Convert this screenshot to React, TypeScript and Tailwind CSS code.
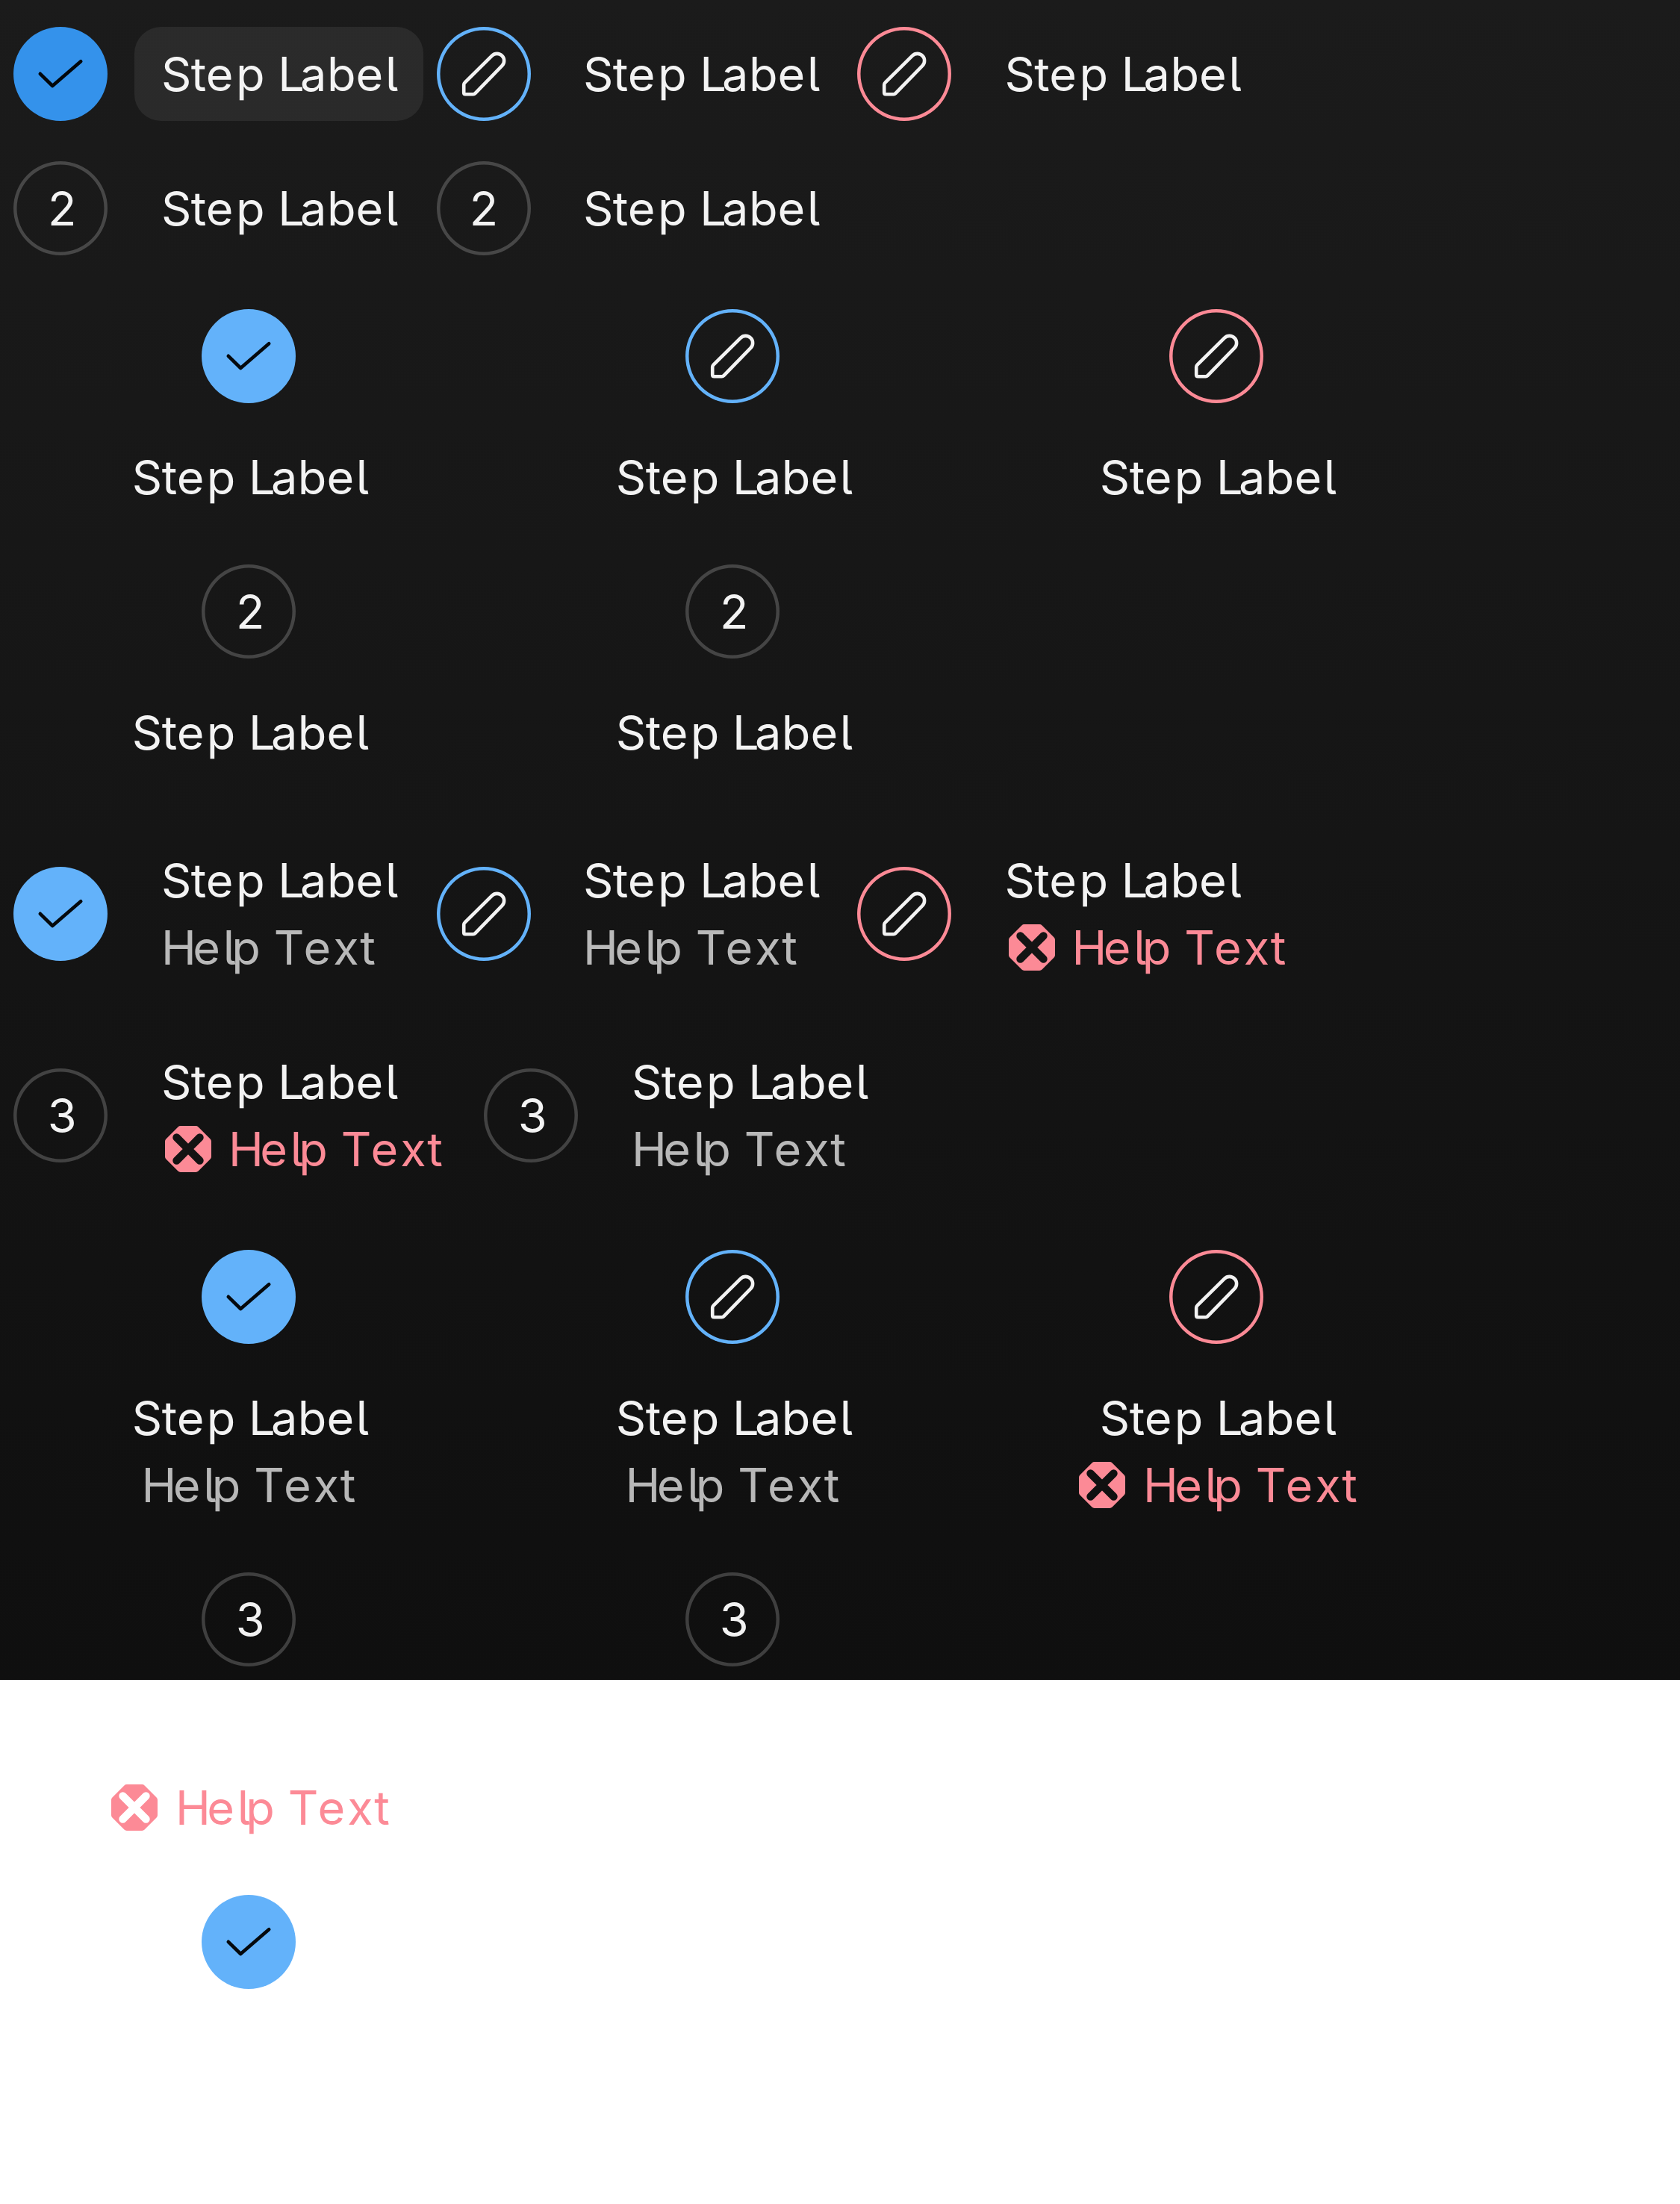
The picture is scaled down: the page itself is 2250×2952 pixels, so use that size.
import { useId, type ReactNode } from "react";
import clsx from "clsx";

type Status = "hover" | "done" | "edit" | "error" | "idle";

const StepLabelText = () => (
  <span className="whitespace-pre text-white/95">
    <span className="tracking-[-0.6px]">St</span>
    <span className="tracking-[3.3px]">e</span>p{" "}
    <span className="tracking-[-5.7px]">L</span>
    <span className="tracking-[0.5px]">a</span>b
    <span className="tracking-[2.6px]">e</span>l
  </span>
);

const HelpTextText = () => (
  <span className="whitespace-pre">
    <span className="tracking-[-4.5px]">H</span>
    <span className="tracking-[3.6px]">e</span>
    <span className="tracking-[-5.7px]">l</span>p{" "}
    <span className="tracking-[-0.9px]">T</span>
    <span className="tracking-[3.1px]">e</span>
    <span className="tracking-[1.7px]">x</span>t
  </span>
);

const CheckIcon = () => (
  <svg viewBox="0 0 126 126" className="size-[126px]" fill="none" stroke="currentColor" strokeWidth="4.6" strokeLinecap="round" strokeLinejoin="round">
    <path d="M35.8 62.8L52.3 79L90.2 46.3" />
  </svg>
);

const PencilIcon = () => (
  <svg viewBox="0 0 126 126" className="size-[126px]" fill="none" stroke="currentColor" strokeWidth="4.6" strokeLinejoin="round">
    <path d="M37.5 74.6L73.9 38.6A9.5 9.5 0 0 1 87.3 52.1L51.3 89.2Q50.2 90.3 48.8 90.3H38.4Q36.2 90.3 36.2 88.1V77.6Q36.2 75.8 37.5 74.6Z" />
  </svg>
);

function ErrorIcon() {
  const id = useId();
  return (
    <svg viewBox="0 0 72 72" className="size-[72px] shrink-0" fill="currentColor">
      <mask id={id}>
        <rect width="72" height="72" fill="white" />
        <path d="M20.5 20.5L51.5 51.5M51.5 20.5L20.5 51.5" stroke="black" strokeWidth="10.4" strokeLinecap="round" />
      </mask>
      <path
        mask={`url(#${id})`}
        d="M25.8 5H46.2Q48.2 5 49.6 6.4L65.6 22.4Q67 23.8 67 25.8V46.2Q67 48.2 65.6 49.6L49.6 65.6Q48.2 67 46.2 67H25.8Q23.8 67 22.4 65.6L6.4 49.6Q5 48.2 5 46.2V25.8Q5 23.8 6.4 22.4L22.4 6.4Q23.8 5 25.8 5Z"
      />
    </svg>
  );
}

function Indicator({ status, number, flush }: { status: Status; number?: number; flush?: boolean }) {
  return (
    <div
      className={clsx(
        "flex size-[126px] shrink-0 items-center justify-center rounded-full leading-[90px]",
        status === "hover" && "bg-[#3492eb] text-black/95",
        status === "done" && "bg-[#63b2fa] text-black/95",
        status === "edit" && "text-white/95 shadow-[inset_0_0_0_4.5px_#63b2fa]",
        status === "error" && "text-white/95 shadow-[inset_0_0_0_4.5px_#fc8a96]",
        status === "idle" && "text-white/95 shadow-[inset_0_0_0_4.5px_rgba(255,255,255,0.2)]",
      )}
    >
      {(status === "hover" || status === "done") && <CheckIcon />}
      {(status === "edit" || status === "error") && <PencilIcon />}
      {status === "idle" && <span className={flush ? "" : "pl-[4.5px]"}>{number}</span>}
    </div>
  );
}

function Help({ error, wide }: { error?: boolean; wide?: boolean }) {
  return (
    <div className={clsx("flex h-[90px] items-center leading-[90px]", wide ? "gap-[19px]" : "gap-[18px]", error ? "text-[#fc8a96]" : "text-white/70")}>
      {error && <ErrorIcon />}
      <HelpTextText />
    </div>
  );
}

interface StepProps {
  status: Status;
  number?: number;
  help?: "plain" | "error";
  flush?: boolean;
  className?: string;
}

function InlineStep({ status, number, help, flush, className }: StepProps) {
  return (
    <div className={clsx("flex shrink-0 items-center", className)}>
      <Indicator status={status} number={number} flush={flush} />
      <div
        className={clsx(
          "flex shrink-0 flex-col items-start rounded-[36px] pr-[35px] pl-[36px]",
          flush ? "ml-[34px]" : "ml-[36px]",
          !help && "h-[126px] justify-center",
          status === "hover" && "w-[387px] bg-white/7",
        )}
      >
        <div className="h-[90px] leading-[90px]">
          <StepLabelText />
        </div>
        {help && <Help error={help === "error"} />}
      </div>
    </div>
  );
}

function StackedStep({ status, number, help, hideLabel }: StepProps & { hideLabel?: boolean }) {
  return (
    <div className="flex w-[648px] shrink-0 flex-col items-center">
      <Indicator status={status} number={number} />
      <div className="mt-[54px] flex flex-col items-center">
        <div className="h-[90px] pl-[5px] leading-[90px]">{!hideLabel && <StepLabelText />}</div>
        {help && <Help error={help === "error"} wide={help === "error"} />}
      </div>
    </div>
  );
}

const Row = ({ className, children }: { className?: string; children?: ReactNode }) => (
  <div className={clsx("flex", className)}>{children}</div>
);

export default function App() {
  return (
    <main className="flex h-[2952px] w-[2250px] flex-col overflow-hidden bg-white bg-[linear-gradient(#1b1b1b,#0f0f0f)] bg-[length:100%_2250px] bg-no-repeat pt-[36px] font-['Inter',sans-serif] text-[63px] [font-feature-settings:'cv05'] [font-kerning:none]">
      <Row className="pl-[18px]">
        <InlineStep status="hover" className="w-[567px]" />
        <InlineStep status="edit" flush className="w-[562.5px]" />
        <InlineStep status="error" />
      </Row>
      <Row className="mt-[54px] pl-[18px]">
        <InlineStep status="idle" number={2} className="w-[567px]" />
        <InlineStep status="idle" number={2} flush />
      </Row>
      <Row className="mt-[72px] pl-[9px]">
        <StackedStep status="done" />
        <StackedStep status="edit" />
        <StackedStep status="error" />
      </Row>
      <Row className="mt-[72px] pl-[9px]">
        <StackedStep status="idle" number={2} />
        <StackedStep status="idle" number={2} />
      </Row>
      <Row className="mt-[108px] pl-[18px]">
        <InlineStep status="done" help="plain" className="w-[567px]" />
        <InlineStep status="edit" help="plain" flush className="w-[562.5px]" />
        <InlineStep status="error" help="error" />
      </Row>
      <Row className="mt-[90px] pl-[18px]">
        <InlineStep status="idle" number={3} help="error" className="w-[630px]" />
        <InlineStep status="idle" number={3} help="plain" />
      </Row>
      <Row className="mt-[90px] pl-[9px]">
        <StackedStep status="done" help="plain" />
        <StackedStep status="edit" help="plain" />
        <StackedStep status="error" help="error" />
      </Row>
      <Row className="mt-[72px] pl-[9px]">
        <StackedStep status="idle" number={3} help="error" hideLabel />
        <StackedStep status="idle" number={3} hideLabel />
      </Row>
      <Row className="mt-[72px] pl-[9px]">
        <StackedStep status="done" hideLabel />
      </Row>
    </main>
  );
}
